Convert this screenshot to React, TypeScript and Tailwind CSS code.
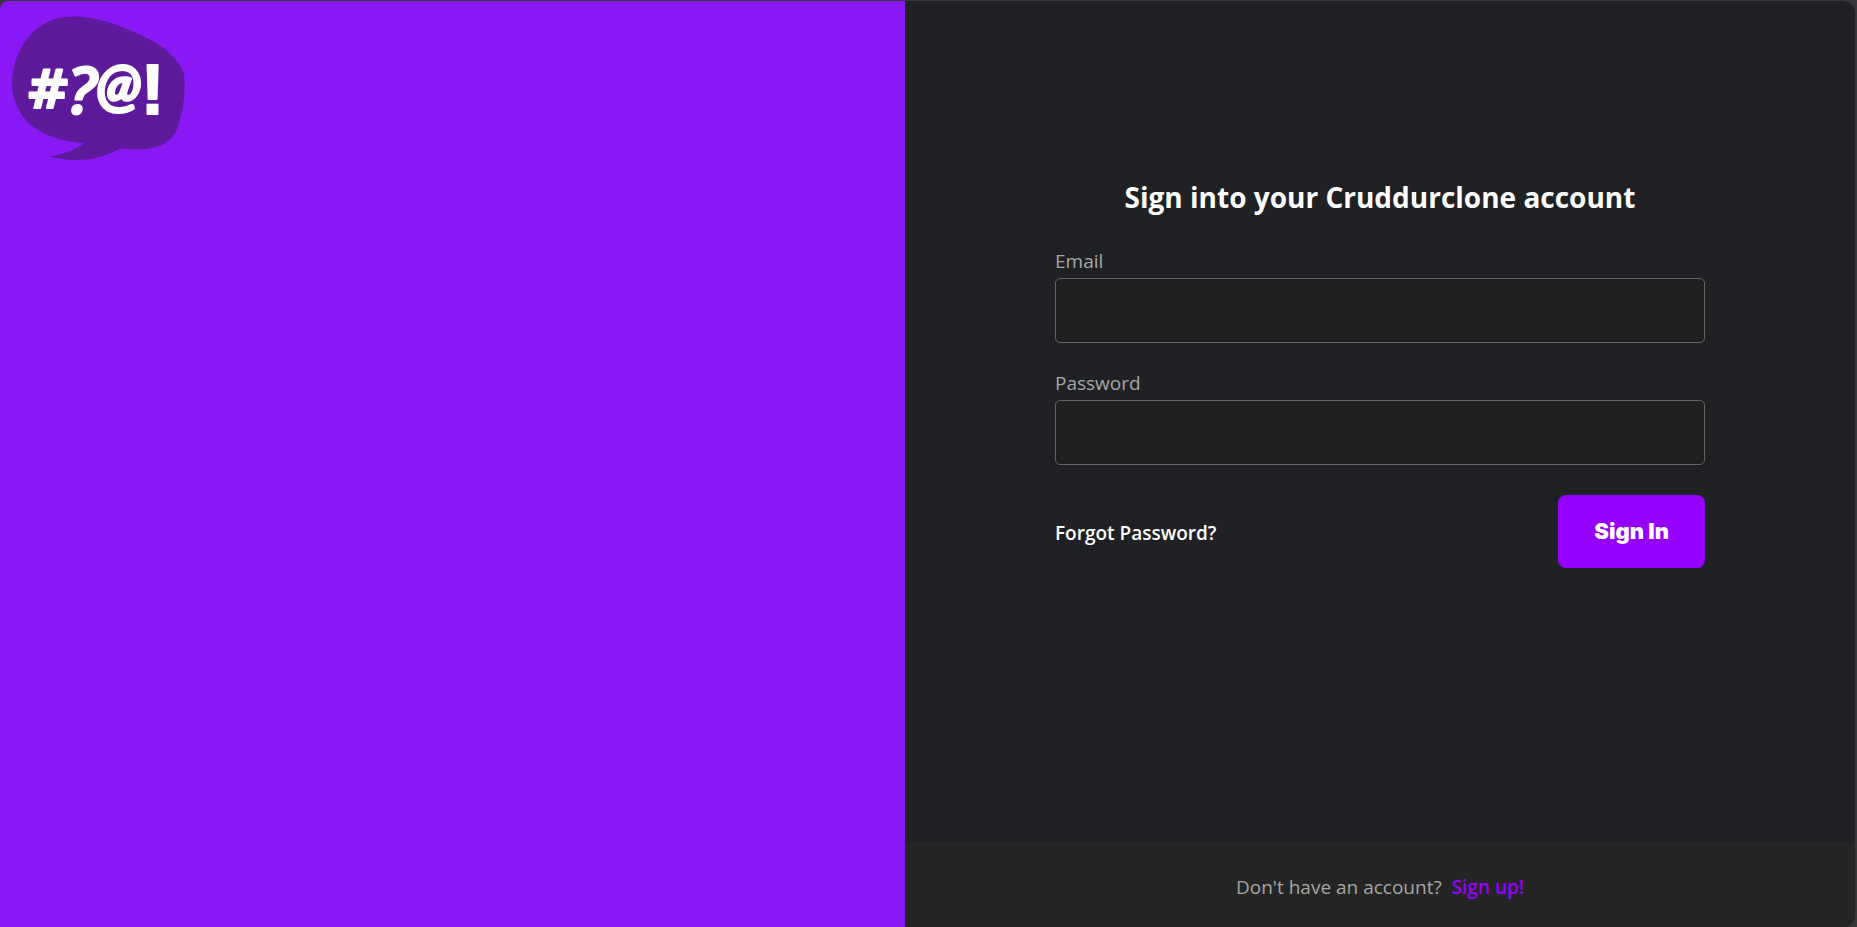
import React from 'react';

function Logo() {
  return (
    <svg viewBox="12 15 176 150" className="h-[150px] w-[176px]" role="img" aria-label="Cruddur">
      <path
        fill="#5d1a9b"
        d="M77 16.500 C88 16.700 103 20 117 25 C133 31 149 38 162 47 C174 56 181 65 184 74 C186 91 183 114 177 129 C170 144 156 149 139 149.500 C132 149.500 126 149 120 148.500 C106 156 92 160 78 160 C68 160 58 159 50 156.500 C64 154 75 150 84 143.200 C66 142 46 137 32 126 C18 114 12 99 12 82 C13 54 29 29 53 19.500 C60 17 69 16.400 77 16.500Z"
      />
      <text
        fill="#fff"
        stroke="#fff"
        strokeWidth="2"
        strokeLinejoin="round"
        fontWeight="700"
        fontFamily="'Liberation Sans', sans-serif"
      >
        <tspan x="26" y="108" fontSize="53" fontFamily="'DejaVu Sans', sans-serif">#</tspan>
        <tspan x="67" y="114" fontSize="66" fontWeight="600" fontStyle="italic" fontFamily="'Open Sans', sans-serif">?</tspan>
        <tspan x="96" y="106" fontSize="59" fontStyle="italic" fontWeight="900" fontFamily="Lato, sans-serif">@</tspan>
        <tspan x="141" y="114" fontSize="70">!</tspan>
      </text>
    </svg>
  );
}

type FieldProps = { id: string; label: string; type: string };

function Field({ id, label, type }: FieldProps) {
  return (
    <div className="flex flex-col gap-[7px]">
      <label htmlFor={id} className="text-[19px] leading-5 text-[#a5a5a5]">
        {label}
      </label>
      <input
        id={id}
        name={id}
        type={type}
        className="h-[65px] w-full rounded-[5px] border border-[#636363] bg-[#1f1f1f] px-4 text-[19px] text-white outline-none"
      />
    </div>
  );
}

export default function App() {
  return (
    <div className="min-h-screen bg-[#383838] pt-px pr-0.5 font-['Open_Sans',sans-serif]">
      <div className="flex min-h-[calc(100vh-1px)] overflow-hidden rounded-xl rounded-bl-none rounded-tl-lg bg-[#202124]">
        <aside className="w-[905px] shrink bg-[#8918f5] px-3 py-3.5">
          <Logo />
        </aside>
        <main className="flex min-w-0 flex-1 flex-col">
          <section className="flex flex-1 flex-col items-center px-6 pt-[173px]">
            <form className="flex w-full max-w-[650px] flex-col gap-[30px]" onSubmit={(e) => e.preventDefault()}>
              <h1 className="text-center text-[28px] leading-[47px] font-bold text-white">
                Sign into your Cruddurclone account
              </h1>
              <Field id="email" label="Email" type="email" />
              <Field id="password" label="Password" type="password" />
              <div className="flex items-center justify-between">
                <a href="#forgot" className="pt-0.5 text-[19px] leading-6 font-semibold text-white">
                  Forgot Password?
                </a>
                <button
                  type="submit"
                  className="h-[73px] rounded-lg bg-[#9500ff] px-9 font-['Inter',sans-serif] text-[22px] font-black text-white"
                >
                  Sign In
                </button>
              </div>
            </form>
          </section>
          <footer className="flex h-[85px] items-center justify-center gap-2.5 bg-[#252525] pt-1 text-[19px] leading-6">
            <span className="text-[#a5a5a5]">Don't have an account?</span>
            <a href="#signup" className="font-semibold text-[#9500ff]">
              Sign up!
            </a>
          </footer>
        </main>
      </div>
    </div>
  );
}
